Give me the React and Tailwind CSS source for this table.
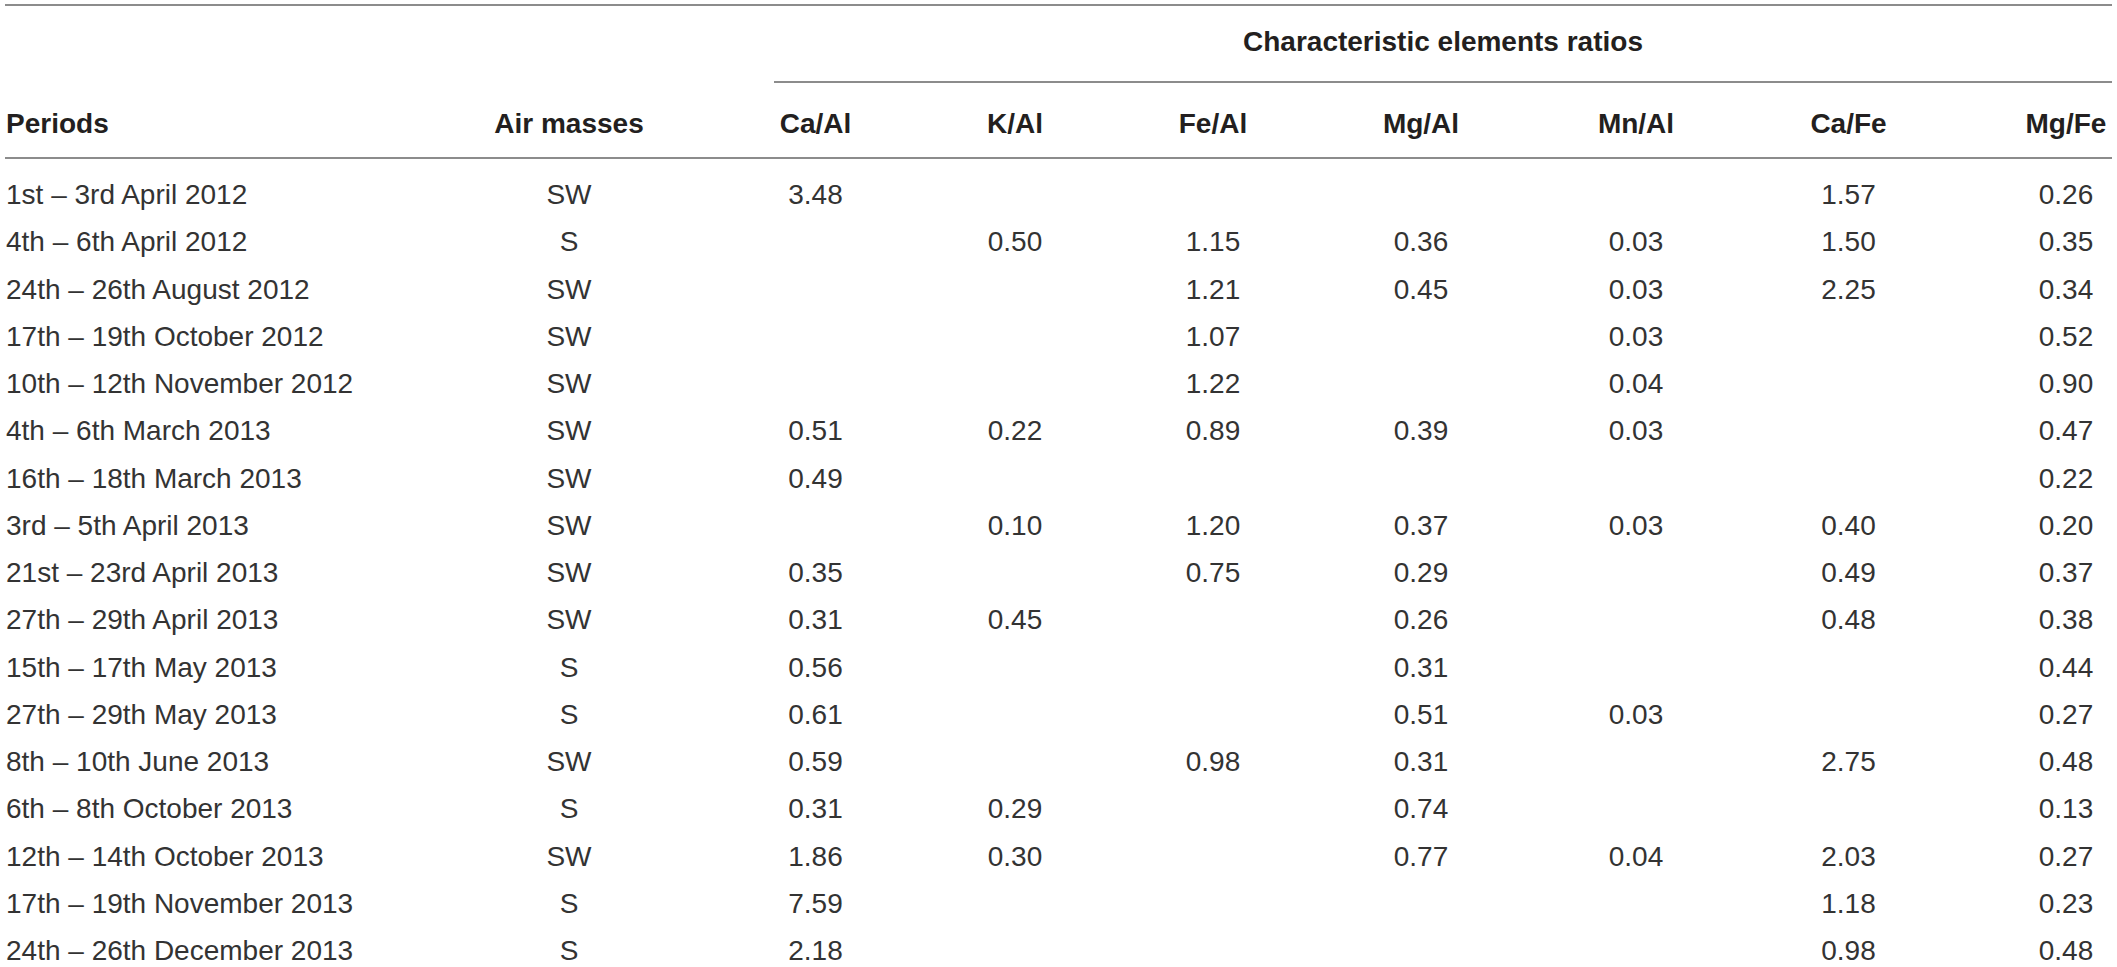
import React from "react";

const rows = [
  ["1st – 3rd April 2012", "SW", "3.48", "", "", "", "", "1.57", "0.26"],
  ["4th – 6th April 2012", "S", "", "0.50", "1.15", "0.36", "0.03", "1.50", "0.35"],
  ["24th – 26th August 2012", "SW", "", "", "1.21", "0.45", "0.03", "2.25", "0.34"],
  ["17th – 19th October 2012", "SW", "", "", "1.07", "", "0.03", "", "0.52"],
  ["10th – 12th November 2012", "SW", "", "", "1.22", "", "0.04", "", "0.90"],
  ["4th – 6th March 2013", "SW", "0.51", "0.22", "0.89", "0.39", "0.03", "", "0.47"],
  ["16th – 18th March 2013", "SW", "0.49", "", "", "", "", "", "0.22"],
  ["3rd – 5th April 2013", "SW", "", "0.10", "1.20", "0.37", "0.03", "0.40", "0.20"],
  ["21st – 23rd April 2013", "SW", "0.35", "", "0.75", "0.29", "", "0.49", "0.37"],
  ["27th – 29th April 2013", "SW", "0.31", "0.45", "", "0.26", "", "0.48", "0.38"],
  ["15th – 17th May 2013", "S", "0.56", "", "", "0.31", "", "", "0.44"],
  ["27th – 29th May 2013", "S", "0.61", "", "", "0.51", "0.03", "", "0.27"],
  ["8th – 10th June 2013", "SW", "0.59", "", "0.98", "0.31", "", "2.75", "0.48"],
  ["6th – 8th October 2013", "S", "0.31", "0.29", "", "0.74", "", "", "0.13"],
  ["12th – 14th October 2013", "SW", "1.86", "0.30", "", "0.77", "0.04", "2.03", "0.27"],
  ["17th – 19th November 2013", "S", "7.59", "", "", "", "", "1.18", "0.23"],
  ["24th – 26th December 2013", "S", "2.18", "", "", "", "", "0.98", "0.48"],
];

const headers = ["Periods", "Air masses", "Ca/Al", "K/Al", "Fe/Al", "Mg/Al", "Mn/Al", "Ca/Fe", "Mg/Fe"];

const cols = [
  "w-[479px] shrink-0 text-left pl-[1px]",
  "w-[170px] shrink-0 text-center",
  "w-[130px] shrink-0 text-center ml-[96.5px]",
  "w-[130px] shrink-0 text-center ml-[69.5px]",
  "w-[130px] shrink-0 text-center ml-[68px]",
  "w-[130px] shrink-0 text-center ml-[78px]",
  "w-[130px] shrink-0 text-center ml-[85px]",
  "w-[130px] shrink-0 text-center ml-[82.5px]",
  "w-[92px] shrink-0 text-center ml-[106.5px]",
];

function Line({ className = "" }) {
  return <div className={"h-[2px] bg-[#8c8c8c] " + className} />;
}

export default function App() {
  return (
    <div
      className="w-[2117px] h-[967px] overflow-hidden bg-white px-[5px] pt-[4px] text-[28px] text-[#231f20]"
      style={{ fontFamily: '"Liberation Sans", Arial, sans-serif' }}
    >
      <Line />
      <div className="mt-[18px] h-[36px] leading-[36px] ml-[769px] text-center font-bold">
        Characteristic elements ratios
      </div>
      <Line className="mt-[21px] ml-[769px]" />
      <div className="mt-[17px] flex h-[47px] leading-[47px] font-bold">
        {headers.map((h, i) => (
          <div key={i} className={cols[i] + " whitespace-nowrap"}>
            {h}
          </div>
        ))}
      </div>
      <Line className="mt-[10px]" />
      <div className="mt-[12px] flex flex-col text-[#333333]">
        {rows.map((r, ri) => (
          <div key={ri} className="flex h-[47.25px] leading-[47.25px]">
            {r.map((c, ci) => (
              <div key={ci} className={cols[ci] + " whitespace-nowrap"}>
                {c}
              </div>
            ))}
          </div>
        ))}
      </div>
    </div>
  );
}
